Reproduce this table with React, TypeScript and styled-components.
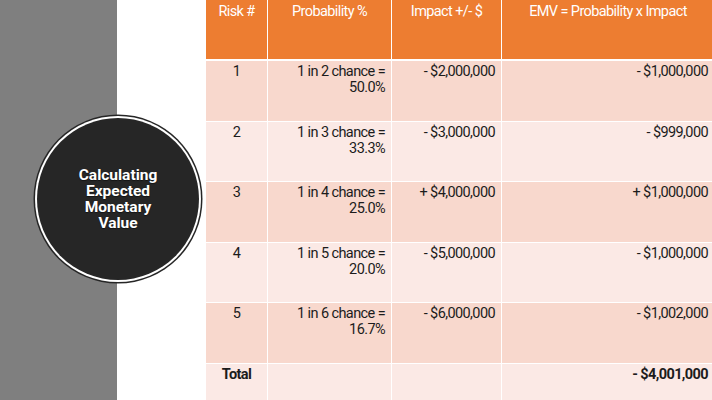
import React from "react";
import styled, { createGlobalStyle } from "styled-components";

const Global = createGlobalStyle`
  html, body { margin: 0; padding: 0; background: #ffffff; }
  body { width: 712px; height: 400px; overflow: hidden; }
`;

const Page = styled.div`
  display: flex;
  width: 712px;
  height: 400px;
  overflow: hidden;
  font-family: Roboto, "Liberation Sans", sans-serif;
`;

const Side = styled.div`
  position: relative;
  flex: 0 0 206px;
  display: flex;
  background: #ffffff;
`;

const GrayBar = styled.div`
  flex: 0 0 117px;
  background: #7f7f7f;
`;

const Circle = styled.div`
  position: absolute;
  left: 37px;
  top: 118px;
  width: 162px;
  height: 162px;
  border-radius: 50%;
  background: #262626;
  box-shadow: 0 0 0 2px #ffffff, 0 0 0 3.5px #262626;
  display: flex;
  flex-direction: column;
  align-items: center;
  justify-content: center;
  color: #ffffff;
  font-weight: 700;
  font-size: 15.5px;
  line-height: 16px;
  text-align: center;
  text-shadow: 0 1px 1px rgba(0, 0, 0, 0.5);
`;

const CircleLine = styled.span`
  display: block;
`;

const Grid = styled.div`
  flex: 0 0 508px;
  display: grid;
  grid-template-columns: 61px 123px 109px 1fr;
  grid-template-rows: 60px repeat(5, 59.6px) 1fr;
  column-gap: 1px;
  row-gap: 1px;
  background: #ffffff;
  font-size: 14.5px;
  letter-spacing: -0.6px;
  line-height: 16px;
  color: #1c1c1c;
`;

const HeadCell = styled.div`
  background: #ed7d31;
  border-bottom: 1px solid #ffffff;
  color: #ffffff;
  text-align: center;
  padding: 4px 6px 0;
`;

const Cell = styled.div<{ $band: boolean; $align: "center" | "right"; $bold?: boolean }>`
  background: ${(p) => (p.$band ? "#f8d8cd" : "#fbe9e5")};
  text-align: ${(p) => p.$align};
  font-weight: ${(p) => (p.$bold ? 700 : 400)};
  padding: 3px 6px 0;
`;

const Line = styled.span`
  display: block;
`;

const rows = [
  ["1", ["1 in 2 chance =", "50.0%"], "- $2,000,000", "- $1,000,000"],
  ["2", ["1 in 3 chance =", "33.3%"], "- $3,000,000", "- $999,000"],
  ["3", ["1 in 4 chance =", "25.0%"], "+ $4,000,000", "+ $1,000,000"],
  ["4", ["1 in 5 chance =", "20.0%"], "- $5,000,000", "- $1,000,000"],
  ["5", ["1 in 6 chance =", "16.7%"], "- $6,000,000", "- $1,002,000"],
] as const;

export default function App() {
  return (
    <Page>
      <Global />
      <Side>
        <GrayBar />
        <Circle>
          <CircleLine>Calculating</CircleLine>
          <CircleLine>Expected</CircleLine>
          <CircleLine>Monetary</CircleLine>
          <CircleLine>Value</CircleLine>
        </Circle>
      </Side>
      <Grid>
        <HeadCell>Risk #</HeadCell>
        <HeadCell>Probability %</HeadCell>
        <HeadCell>Impact +/- $</HeadCell>
        <HeadCell>EMV = Probability x Impact</HeadCell>
        {rows.map((r, i) => (
          <React.Fragment key={r[0]}>
            <Cell $band={i % 2 === 0} $align="center">{r[0]}</Cell>
            <Cell $band={i % 2 === 0} $align="right">
              <Line>{r[1][0]}</Line>
              <Line>{r[1][1]}</Line>
            </Cell>
            <Cell $band={i % 2 === 0} $align="right">{r[2]}</Cell>
            <Cell $band={i % 2 === 0} $align="right">{r[3]}</Cell>
          </React.Fragment>
        ))}
        <Cell $band={false} $align="center" $bold>Total</Cell>
        <Cell $band={false} $align="right" />
        <Cell $band={false} $align="right" />
        <Cell $band={false} $align="right" $bold>- $4,001,000</Cell>
      </Grid>
    </Page>
  );
}
